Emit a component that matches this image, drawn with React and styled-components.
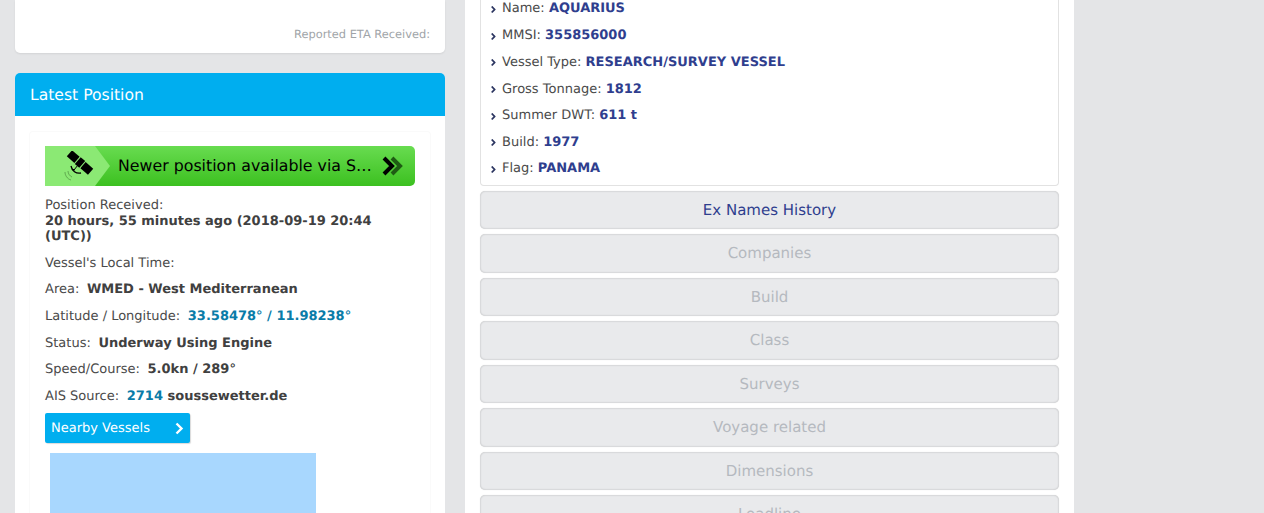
import React from 'react';
import styled, { createGlobalStyle } from 'styled-components';
import { FaAngleRight } from 'react-icons/fa';

const GlobalStyle = createGlobalStyle`
  html, body {
    margin: 0;
    padding: 0;
    background: #e4e5e7;
    overflow: hidden;
  }
  * {
    box-sizing: border-box;
  }
`;

const Page = styled.div`
  display: flex;
  gap: 20px;
  height: 513px;
  padding-left: 15px;
  overflow: hidden;
  font-family: 'DejaVu Sans', sans-serif;
  font-size: 13px;
  line-height: 1.2;
  color: #4a4a4a;
  text-rendering: geometricPrecision;
`;

const LeftColumn = styled.div`
  width: 430px;
  flex: none;
`;

const EtaCard = styled.div`
  display: flex;
  justify-content: flex-end;
  align-items: flex-end;
  height: 53px;
  padding: 0 15px 11px;
  background: #fff;
  border-radius: 0 0 5px 5px;
  box-shadow: 0 1px 2px rgba(0, 0, 0, 0.08);
  color: #a0a4a8;
  font-size: 11.4px;
`;

const PositionCard = styled.div`
  margin-top: 20px;
  height: 440px;
  background: #fff;
  border-radius: 5px 5px 0 0;
`;

const CardHeader = styled.div`
  height: 43px;
  padding-left: 15px;
  background: #00aeef;
  border-radius: 5px 5px 0 0;
  color: #fff;
  font-size: 15.6px;
  line-height: 45px;
`;

const CardBody = styled.div`
  height: 382px;
  margin: 15px 14px 0;
  padding: 14px 15px 0;
  border: 1px solid #fafafa;
  border-bottom: none;
  border-radius: 4px 4px 0 0;
`;

const Banner = styled.div`
  display: flex;
  align-items: center;
  height: 40px;
  margin-bottom: 12px;
  background: linear-gradient(#68dc50, #3cc020);
  border-radius: 0 5px 5px 0;
  overflow: hidden;
`;

const BannerIcon = styled.div`
  display: flex;
  align-items: center;
  flex: none;
  width: 65px;
  height: 40px;
  padding-left: 18px;
  background: #8be974;
  clip-path: polygon(0 0, 50px 0, 65px 20px, 50px 40px, 0 40px);
`;

const BannerText = styled.div`
  flex: none;
  width: 258px;
  margin-left: 8px;
  color: #000;
  font-size: 15.8px;
  white-space: nowrap;
  overflow: hidden;
  text-overflow: ellipsis;
`;

const BannerArrows = styled.svg`
  flex: none;
  margin-left: 5px;
`;

const InfoRow = styled.div`
  margin-bottom: 11px;
`;

const Value = styled.b`
  display: ${({ $block }) => ($block ? 'block' : 'inline')};
  margin-left: ${({ $block }) => ($block ? '0' : '3.5px')};
  color: #404040;
`;

const Accent = styled.span`
  color: #0a7ca8;
`;

const NearbyButton = styled.div`
  display: flex;
  align-items: center;
  justify-content: space-between;
  width: 145px;
  height: 30px;
  margin-top: -2px;
  padding: 0 6px;
  background: #00aeef;
  border-radius: 2px;
  box-shadow: 1px 1px 1px rgba(0, 0, 0, 0.15);
  color: #fff;
`;

const MapArea = styled.div`
  width: 266px;
  height: 100px;
  margin: 10px 0 0 5px;
  background: #a8d7fe;
`;

const RightPanel = styled.div`
  flex: none;
  width: 609px;
  height: 513px;
  padding: 0 15px;
  background: #fff;
  overflow: hidden;
`;

const SpecBox = styled.div`
  height: 186px;
  padding: 0 0 0 9px;
  border: 1px solid #e2e2e2;
  border-top: none;
  border-radius: 0 0 4px 4px;
  color: #4a4a4a;
`;

const SpecRow = styled.div`
  display: flex;
  align-items: center;
  gap: 5px;
  height: 26.6px;
  &:first-child {
    height: 18.4px;
    margin-bottom: 4.6px;
  }
`;

const SpecValue = styled.b`
  color: #2f3e8e;
`;

const Arrow = styled(FaAngleRight)`
  flex: none;
  width: 7px;
  height: 11px;
  color: #2b3560;
`;

const AccordionList = styled.div`
  display: flex;
  flex-direction: column;
  gap: 5px;
  margin-top: 4.75px;
`;

const AccordionItem = styled.div`
  flex: none;
  height: 38.5px;
  background: #e9eaec;
  border-radius: 5px;
  box-shadow: inset 0 0 2px rgba(0, 0, 0, 0.25), 0 0 2px rgba(0, 0, 0, 0.06);
  color: ${({ $active }) => ($active ? '#2f3e8e' : '#b5b9bf')};
  font-size: 15px;
  line-height: 38px;
  text-align: center;
`;

const SatelliteIcon = () => (
  <svg width="32" height="30" viewBox="0 0 32 30">
    <g transform="rotate(41 17 11.5)" fill="#000">
      <rect x="3" y="7.5" width="10" height="8" />
      <rect x="14" y="7" width="6" height="9" />
      <rect x="21" y="7.5" width="10" height="8" />
    </g>
    <path d="M8 15c1 5 5 8 10 7" fill="none" stroke="#000" strokeWidth="1.3" />
    <path d="M15 14l-4 5M12 19l-3-1" fill="none" stroke="#000" strokeWidth="1" />
    <path d="M5 20c0 3 2 5 4 6M2 21c0 3 2 7 6 8" fill="none" stroke="#4d8f3e" strokeWidth="1" opacity="0.7" />
  </svg>
);

const NearbyChevron = () => (
  <svg width="9" height="13" viewBox="0 0 9 13">
    <path d="M1.5 1.5l5 5-5 5" fill="none" stroke="#fff" strokeWidth="2.4" />
  </svg>
);

const specs = [
  ['Name', 'AQUARIUS'],
  ['MMSI', '355856000'],
  ['Vessel Type', 'RESEARCH/SURVEY VESSEL'],
  ['Gross Tonnage', '1812'],
  ['Summer DWT', '611 t'],
  ['Build', '1977'],
  ['Flag', 'PANAMA'],
];

const sections = ['Companies', 'Build', 'Class', 'Surveys', 'Voyage related', 'Dimensions', 'Loadline'];

const App = () => (
  <>
    <GlobalStyle />
    <Page>
      <LeftColumn>
        <EtaCard>Reported ETA Received:</EtaCard>
        <PositionCard>
          <CardHeader>Latest Position</CardHeader>
          <CardBody>
            <Banner>
              <BannerIcon>
                <SatelliteIcon />
              </BannerIcon>
              <BannerText>Newer position available via Satellite AIS</BannerText>
              <BannerArrows width="22" height="20" viewBox="0 0 22 20">
                <path d="M11 2l8 8-8 8" fill="none" stroke="#1f5c14" strokeWidth="4" />
                <path d="M3 2l8 8-8 8" fill="none" stroke="#000" strokeWidth="4" />
              </BannerArrows>
            </Banner>
            <InfoRow>
              Position Received:
              <Value $block>20 hours, 55 minutes ago (2018-09-19 20:44 (UTC))</Value>
            </InfoRow>
            <InfoRow>Vessel's Local Time:</InfoRow>
            <InfoRow>Area: <Value>WMED - West Mediterranean</Value></InfoRow>
            <InfoRow>Latitude / Longitude: <Value><Accent>33.58478° / 11.98238°</Accent></Value></InfoRow>
            <InfoRow>Status: <Value>Underway Using Engine</Value></InfoRow>
            <InfoRow>Speed/Course: <Value>5.0kn / 289°</Value></InfoRow>
            <InfoRow>AIS Source: <Value><Accent>2714</Accent> soussewetter.de</Value></InfoRow>
            <NearbyButton>
              Nearby Vessels
              <NearbyChevron />
            </NearbyButton>
            <MapArea />
          </CardBody>
        </PositionCard>
      </LeftColumn>
      <RightPanel>
        <SpecBox>
          {specs.map(([label, value]) => (
            <SpecRow key={label}>
              <Arrow />
              <span>{label}: <SpecValue>{value}</SpecValue></span>
            </SpecRow>
          ))}
        </SpecBox>
        <AccordionList>
          <AccordionItem $active>Ex Names History</AccordionItem>
          {sections.map((name) => (
            <AccordionItem key={name}>{name}</AccordionItem>
          ))}
        </AccordionList>
      </RightPanel>
    </Page>
  </>
);

export default App;
